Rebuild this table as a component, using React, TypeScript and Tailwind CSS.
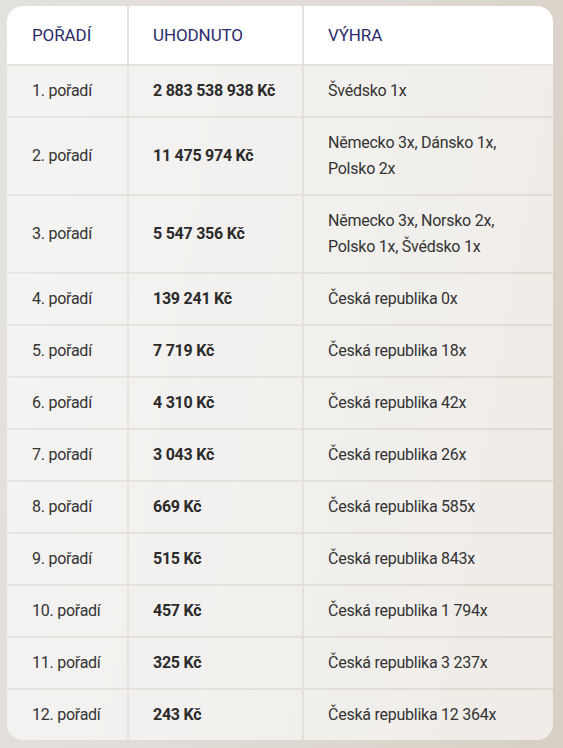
import React from "react";

const rows: [string, string, string[]][] = [
  ["1. pořadí", "2 883 538 938 Kč", ["Švédsko 1x"]],
  ["2. pořadí", "11 475 974 Kč", ["Německo 3x, Dánsko 1x,", "Polsko 2x"]],
  ["3. pořadí", "5 547 356 Kč", ["Německo 3x, Norsko 2x,", "Polsko 1x, Švédsko 1x"]],
  ["4. pořadí", "139 241 Kč", ["Česká republika 0x"]],
  ["5. pořadí", "7 719 Kč", ["Česká republika 18x"]],
  ["6. pořadí", "4 310 Kč", ["Česká republika 42x"]],
  ["7. pořadí", "3 043 Kč", ["Česká republika 26x"]],
  ["8. pořadí", "669 Kč", ["Česká republika 585x"]],
  ["9. pořadí", "515 Kč", ["Česká republika 843x"]],
  ["10. pořadí", "457 Kč", ["Česká republika 1 794x"]],
  ["11. pořadí", "325 Kč", ["Česká republika 3 237x"]],
  ["12. pořadí", "243 Kč", ["Česká republika 12 364x"]],
];

export default function App() {
  return (
    <div
      className="w-[563px] h-[748px] overflow-hidden pt-[6px] pl-[7px] bg-[linear-gradient(100deg,#e4e2de_0%,#dfdbd5_50%,#d7cfc3_100%)]"
      style={{ fontFamily: "Roboto, 'Noto Sans', sans-serif" }}
    >
      <div className="w-[546px] rounded-[16px] overflow-hidden">
        <div className="grid grid-cols-[122px_175px_249px] bg-white border-b-2 border-[#e6e3de] text-[17px] leading-[26px] tracking-[-0.1px] text-[#2a2b6b]">
          <div className="pl-[25px] py-4 border-r-2 border-[#e6e3de]">POŘADÍ</div>
          <div className="pl-6 py-4 border-r-2 border-[#e6e3de]">UHODNUTO</div>
          <div className="pl-6 py-4">VÝHRA</div>
        </div>
        {rows.map(([a, b, c], i) => (
          <div
            key={i}
            className={
              "grid grid-cols-[122px_175px_249px] text-[16px] leading-[26px] tracking-[-0.25px] text-[#333333] " +
              (i < rows.length - 1 ? "border-b-2 border-white/20" : "")
            }
          >
            <div className="pl-[25px] py-3 bg-white/60 bg-clip-padding border-r-2 border-white/20 flex items-center">{a}</div>
            <div className="pl-6 py-3 bg-white/60 bg-clip-padding border-r-2 border-white/20 flex items-center font-bold text-[#2b2b2b]">{b}</div>
            <div className="pl-6 py-3 bg-white/60 flex flex-col justify-center">
              {c.map((l, j) => (
                <div key={j}>{l}</div>
              ))}
            </div>
          </div>
        ))}
      </div>
    </div>
  );
}
